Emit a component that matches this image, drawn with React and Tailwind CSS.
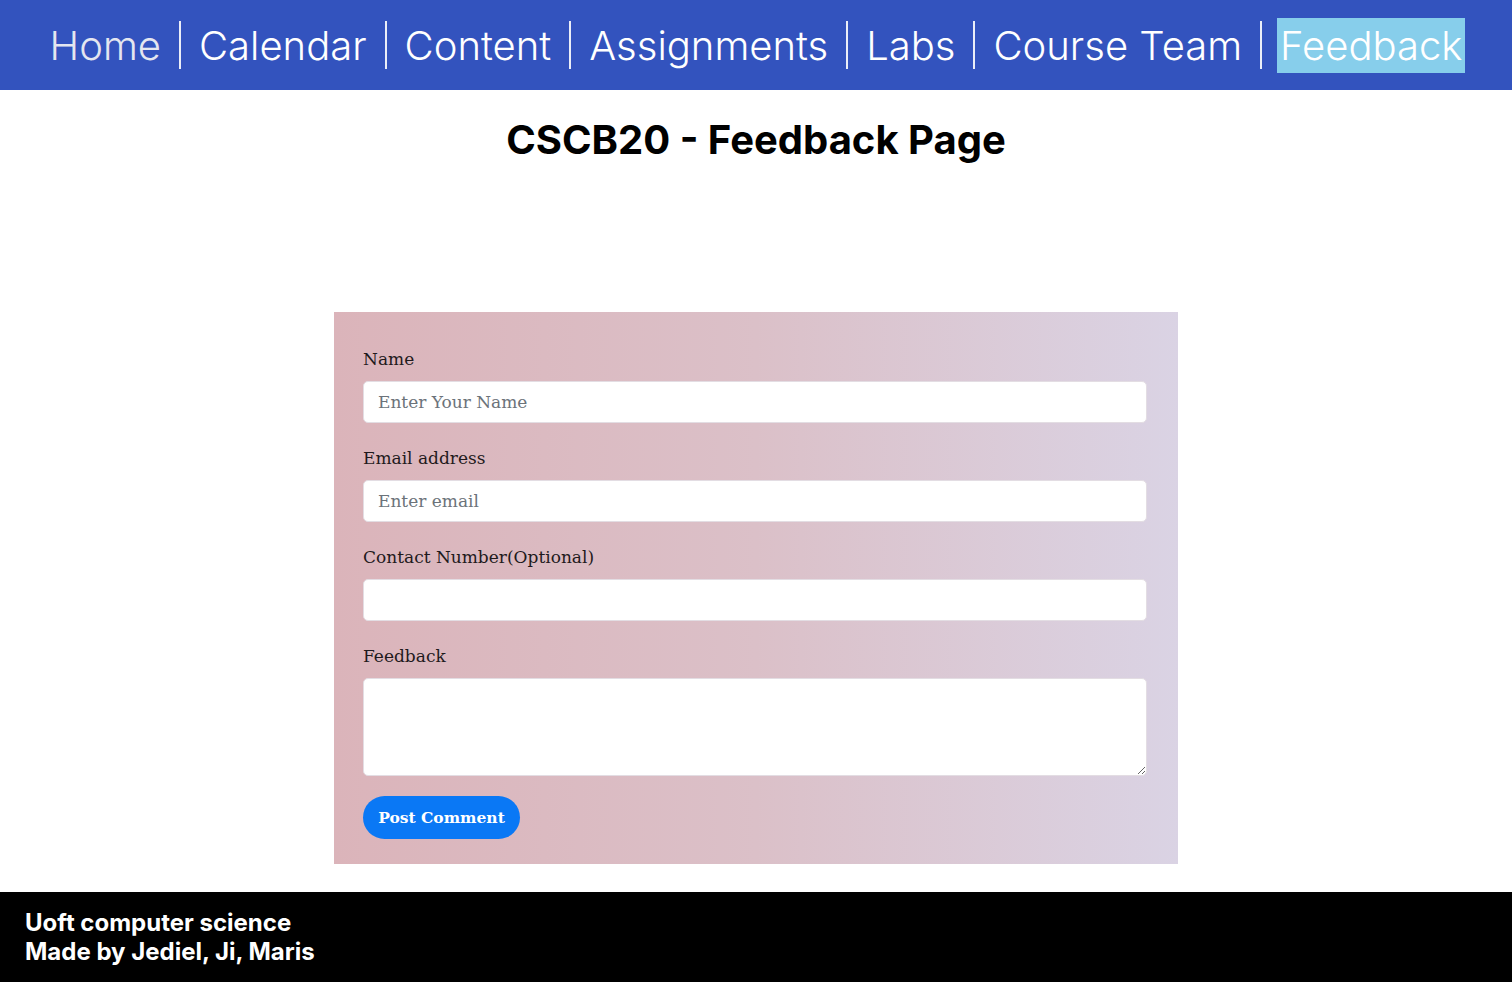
import React from 'react';

const links = ["Home", "Calendar", "Content", "Assignments", "Labs", "Course Team", "Feedback"];

const inputCls =
  "w-full h-[42px] bg-white rounded-[5px] border border-[#e3dde3] px-[14px] text-[17px] text-[#495057] placeholder:text-[#6c737a] focus:outline-none";

const Field = ({ label, placeholder, type = "text" }) => (
  <div className="mb-[22px]">
    <label className="block mb-[8px] text-[17px] leading-[27px] text-[#1f1a1c]">{label}</label>
    <input type={type} placeholder={placeholder} className={inputCls} />
  </div>
);

const App = () => {
  return (
    <div className="min-h-[982px] flex flex-col bg-white font-['Inter',sans-serif]">
      {/* Navigation */}
      <nav className="h-[90px] bg-[#3353be] flex items-center justify-center">
        {links.map((name, i) => (
          <React.Fragment key={name}>
            {i > 0 && <span className="w-[2px] h-[48px] bg-white/90 mx-[15px]" />}
            <a
              href="#"
              className={
                "text-[40px] leading-[55px] font-light px-[3px] " +
                (name === "Feedback"
                  ? "bg-[#87ceeb] text-white"
                  : name === "Home"
                  ? "text-[#e4e6f0]"
                  : "text-white")
              }
            >
              {name}
            </a>
          </React.Fragment>
        ))}
      </nav>

      {/* Title */}
      <h1 className="mt-[30px] text-center text-[40px] leading-[40px] font-bold text-black">
        CSCB20 - Feedback Page
      </h1>

      {/* Feedback form */}
      <form
        className="mt-[152px] mx-auto w-[844px] bg-linear-to-r from-[#dbb4ba] via-[#dbc0c8] to-[#dad3e4] pt-[34px] pb-[25px] pl-[29px] pr-[31px] font-['DejaVu_Serif',serif]"
        onSubmit={(e) => e.preventDefault()}
      >
        <Field label="Name" placeholder="Enter Your Name" />
        <Field label="Email address" placeholder="Enter email" type="email" />
        <Field label="Contact Number(Optional)" placeholder="" />
        <div className="mb-[20px]">
          <label className="block mb-[8px] text-[17px] leading-[27px] text-[#1f1a1c]">Feedback</label>
          <textarea className="block w-full h-[98px] bg-white rounded-[5px] border border-[#e3dde3] px-[14px] py-[8px] text-[17px] focus:outline-none" />
        </div>
        <button
          type="submit"
          className="h-[43px] w-[157px] rounded-full bg-[#0a78f5] text-white text-[15.5px] font-bold"
        >
          Post Comment
        </button>
      </form>

      <div className="flex-1 min-h-[28px]" />

      {/* Footer */}
      <footer className="h-[90px] bg-black text-white pl-[25px] flex flex-col justify-center">
        <p className="text-[24px] leading-[29px] font-bold">Uoft computer science</p>
        <p className="text-[24px] leading-[29px] font-bold">Made by Jediel, Ji, Maris</p>
      </footer>
    </div>
  );
};

export default App;
